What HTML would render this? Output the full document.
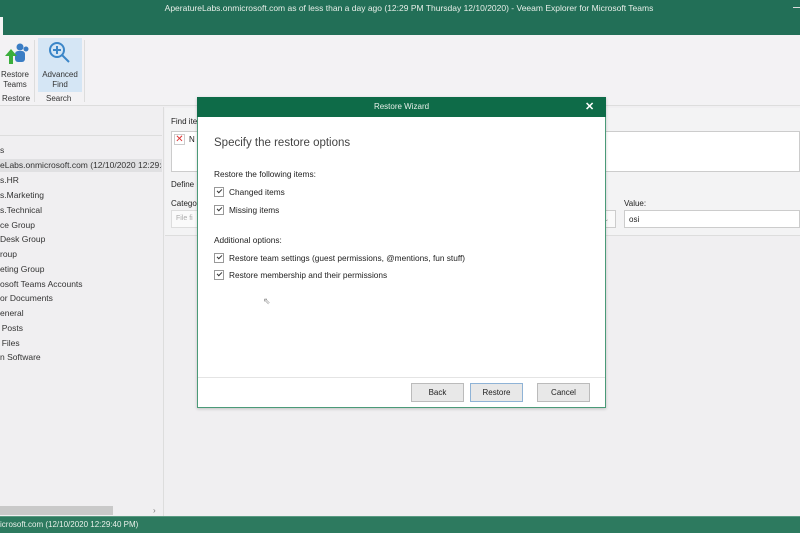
<!DOCTYPE html>
<html><head><style>
*{margin:0;padding:0;box-sizing:border-box}
body{width:800px;height:533px;overflow:hidden;background:#f0eff1;font-family:"Liberation Sans",sans-serif;font-size:8px;color:#222;position:relative}
.a{position:absolute}
.tree div{position:absolute;left:0;font-size:8.5px;color:#333;white-space:nowrap}
.cb{position:absolute;width:10px;height:10px;border:1px solid #999;background:#fff}
.cb:after{content:"";position:absolute;left:2px;top:1px;width:4px;height:2px;border-left:1.5px solid #333;border-bottom:1.5px solid #333;transform:rotate(-45deg)}
.btn{position:absolute;top:383px;height:19px;border:1px solid #bbb;background:#e8e8e8;font-size:8px;text-align:center;line-height:17px;color:#222}
.t{font-size:8.3px}
</style></head><body>
<div class="a" style="left:0;top:0;width:800px;height:35px;background:#226f57"></div>
<div class="a" style="left:0;top:17px;width:3px;height:18px;background:#f4f4f4"></div>
<div class="a" style="left:0;top:3px;width:800px;text-align:center;color:#e8efe9;font-size:8.5px;padding-left:18px">AperatureLabs.onmicrosoft.com as of less than a day ago (12:29 PM Thursday 12/10/2020) - Veeam Explorer for Microsoft Teams</div>
<div class="a" style="left:793px;top:7px;width:7px;height:1px;background:#ddd"></div>
<div class="a" style="left:0;top:35px;width:800px;height:71px;background:#f3f2f4;border-bottom:1px solid #ddd"></div>
<div class="a" style="left:38px;top:38px;width:44px;height:54px;background:#d5e6f5"></div>
<svg class="a" style="left:2px;top:40px" width="28" height="28" viewBox="0 0 28 28"><circle cx="18" cy="7" r="3.5" fill="#3b7dc4"/><circle cx="24" cy="9" r="2.5" fill="#3b7dc4"/><rect x="13" y="11" width="10" height="11" rx="3" fill="#3b7dc4"/><path d="M7 24V16H3l6-7 6 7h-4v8z" fill="#3cae3c"/></svg>
<svg class="a" style="left:47px;top:40px" width="26" height="26" viewBox="0 0 26 26"><circle cx="10" cy="10" r="7" fill="none" stroke="#3b86c8" stroke-width="2"/><path d="M15 15l7 7M10 6v8M6 10h8" stroke="#3b86c8" stroke-width="2"/></svg>
<div class="a" style="left:0;top:70px;width:30px;text-align:center;font-size:8px;line-height:10px;color:#333">Restore<br>Teams</div>
<div class="a" style="left:2px;top:94px;font-size:8px;color:#333">Restore</div>
<div class="a" style="left:38px;top:70px;width:44px;text-align:center;font-size:8px;line-height:10px;color:#333">Advanced<br>Find</div>
<div class="a" style="left:46px;top:94px;font-size:8px;color:#333">Search</div>
<div class="a" style="left:34px;top:40px;width:1px;height:62px;background:#ddd"></div>
<div class="a" style="left:84px;top:40px;width:1px;height:62px;background:#ddd"></div>
<div class="a" style="left:0;top:135px;width:162px;height:1px;background:#ddd"></div>
<div class="a" style="left:163px;top:107px;width:1px;height:410px;background:#ddd"></div>
<div class="a" style="left:0;top:159px;width:162px;height:13px;background:#e0e0e2"></div>
<div class="tree a" style="left:0;top:0;width:162px;height:400px;overflow:hidden">
<div style="top:145px">s</div>
<div style="top:160px">eLabs.onmicrosoft.com (12/10/2020 12:29:40</div>
<div style="top:175px">s.HR</div>
<div style="top:190px">s.Marketing</div>
<div style="top:205px">s.Technical</div>
<div style="top:220px">ce Group</div>
<div style="top:234px">Desk Group</div>
<div style="top:249px">roup</div>
<div style="top:264px">eting Group</div>
<div style="top:279px">osoft Teams Accounts</div>
<div style="top:293px">or Documents</div>
<div style="top:308px">eneral</div>
<div style="top:323px">&#x2009;Posts</div>
<div style="top:338px">&#x2009;Files</div>
<div style="top:352px">n Software</div>
</div>
<div class="a" style="left:0;top:506px;width:113px;height:9px;background:#c9c9c9"></div>
<div class="a" style="left:153px;top:506px;font-size:8px;color:#777">›</div>
<div class="a" style="left:0;top:516px;width:800px;height:17px;background:#2d7a5f;border-top:1px solid #5a9a82"></div>
<div class="a" style="left:0;top:520px;color:#e8efe9;font-size:8px">icrosoft.com (12/10/2020 12:29:40 PM)</div>
<div class="a" style="left:165px;top:108px;width:635px;height:128px;background:#f3f3f4;border-bottom:1px solid #ddd"></div>
<div class="a" style="left:171px;top:117px;font-size:8px">Find ite</div>
<div class="a" style="left:171px;top:131px;width:629px;height:41px;background:#fff;border:1px solid #ccc"></div>
<div class="a" style="left:174px;top:134px;width:11px;height:11px;border:1px solid #ccc;color:#d33;font-size:10px;line-height:9px;text-align:center">✕</div>
<div class="a" style="left:189px;top:135px;font-size:8px">N</div>
<div class="a" style="left:171px;top:180px;font-size:8px">Define</div>
<div class="a" style="left:171px;top:199px;font-size:8px">Catego</div>
<div class="a" style="left:171px;top:210px;width:30px;height:18px;background:#fafafa;border:1px solid #ddd;font-size:7px;color:#aaa;padding:4px 4px">File fi</div>
<div class="a" style="left:600px;top:210px;width:16px;height:18px;background:#fafafa;border:1px solid #ccc;font-size:6px;color:#999;padding:5px 3px">⌄</div>
<div class="a" style="left:624px;top:199px;font-size:8px">Value:</div>
<div class="a" style="left:624px;top:210px;width:176px;height:18px;background:#fff;border:1px solid #ccc;font-size:8px;padding:4px 4px">osi</div>
<div class="a" style="left:197px;top:97px;width:409px;height:311px;background:#fff;border:1px solid #4b9a78;box-shadow:0 1px 3px rgba(0,0,0,.2)"></div>
<div class="a" style="left:197px;top:97px;width:409px;height:20px;background:#0e6b48;color:#e8f0ea;font-size:8px;text-align:center;line-height:20px">Restore Wizard</div>
<div class="a" style="left:585px;top:100px;color:#fff;font-size:11px;font-weight:bold">✕</div>
<div class="a" style="left:214px;top:137px;font-size:11.5px;color:#444">Specify the restore options</div>
<div class="a t" style="left:214px;top:169px">Restore the following items:</div>
<div class="cb" style="left:214px;top:187px"></div><div class="a t" style="left:229px;top:187px">Changed items</div>
<div class="cb" style="left:214px;top:205px"></div><div class="a t" style="left:229px;top:205px">Missing items</div>
<div class="a t" style="left:214px;top:235px">Additional options:</div>
<div class="cb" style="left:214px;top:253px"></div><div class="a t" style="left:229px;top:253px">Restore team settings (guest permissions, @mentions, fun stuff)</div>
<div class="cb" style="left:214px;top:270px"></div><div class="a t" style="left:229px;top:270px">Restore membership and their permissions</div>
<div class="a" style="left:263px;top:296px;font-size:9px;color:#888">⇖</div>
<div class="a" style="left:198px;top:377px;width:407px;height:1px;background:#e4e4e4"></div>
<div class="btn" style="left:411px;width:53px">Back</div>
<div class="btn" style="left:470px;width:53px;border-color:#8fb3d6">Restore</div>
<div class="btn" style="left:537px;width:53px">Cancel</div>
</body></html>
